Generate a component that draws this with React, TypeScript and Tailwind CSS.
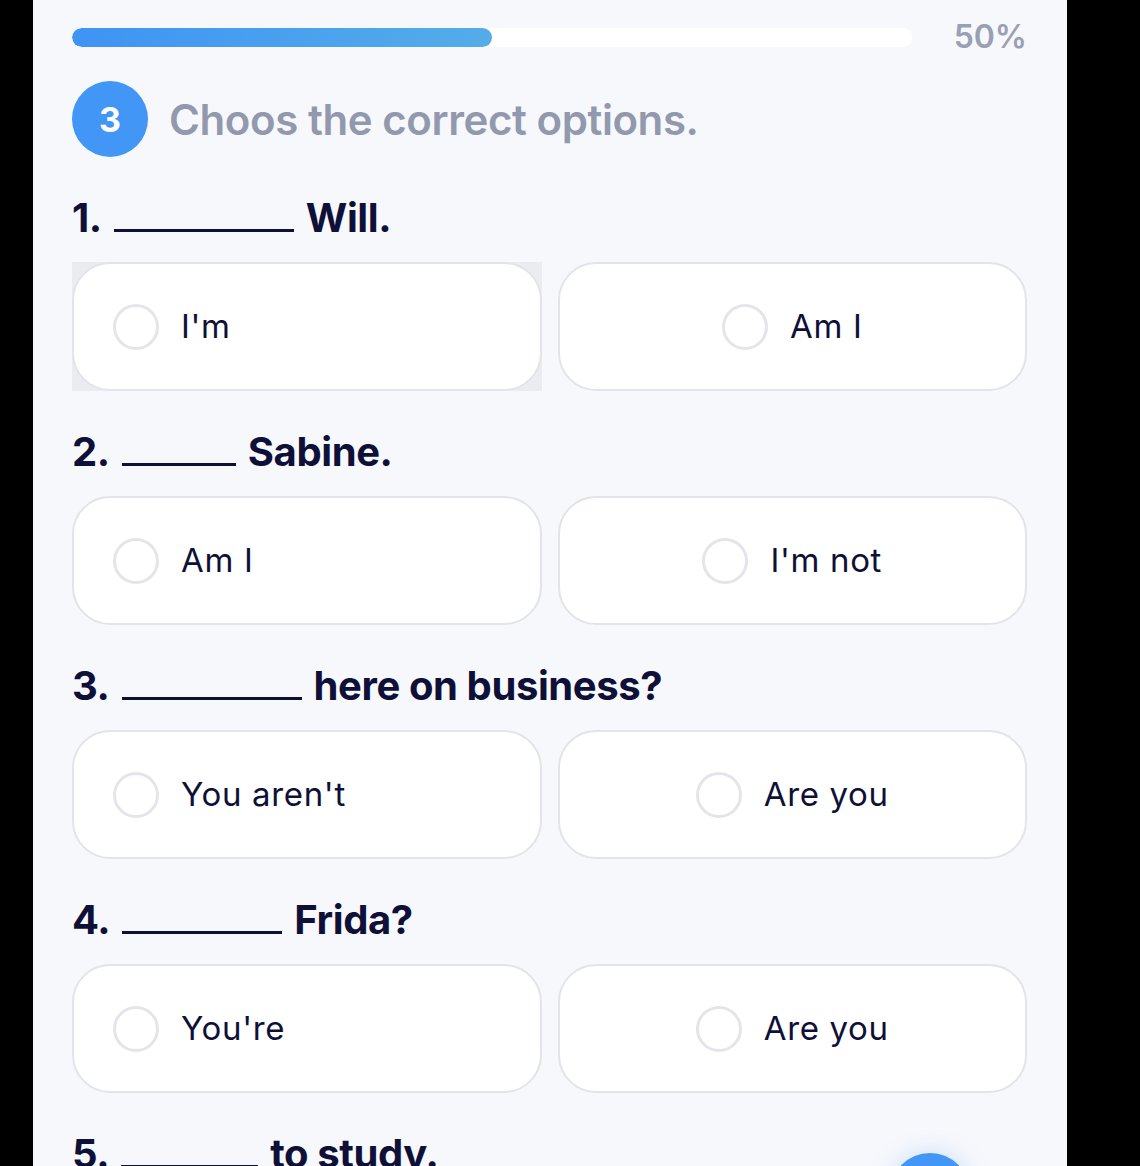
import React from "react";

type Question = {
  num: string;
  blank: number;
  rest: string;
  left: string;
  right: string;
  hovered?: boolean;
};

const questions: Question[] = [
  { num: "1.", blank: 180, rest: "Will.", left: "I'm", right: "Am I", hovered: true },
  { num: "2.", blank: 114, rest: "Sabine.", left: "Am I", right: "I'm not" },
  { num: "3.", blank: 180, rest: "here on business?", left: "You aren't", right: "Are you" },
  { num: "4.", blank: 160, rest: "Frida?", left: "You're", right: "Are you" },
];

const Radio = () => (
  <span className="block w-[46px] h-[46px] shrink-0 rounded-full border-[3px] border-[#e4e5ea] bg-white" />
);

const Option = ({ label, centered, hovered }: { label: string; centered?: boolean; hovered?: boolean }) => (
  <div className={hovered ? "bg-[#ebecf0]" : ""}>
    <div
      className={`h-[129px] rounded-[38px] border-2 border-[#e3e4ea] bg-white flex items-center gap-[22px] ${
        centered ? "justify-center" : "pl-[39px]"
      }`}
    >
      <Radio />
      <span className="text-[33px] tracking-[0.02em] text-[#0e1038] font-['Inter',sans-serif]">{label}</span>
    </div>
  </div>
);

const Heading = ({ num, blank, rest }: { num: string; blank: number; rest: string }) => (
  <h2 className="h-[48px] flex items-end gap-[12px] text-[40px] leading-[48px] font-bold tracking-[-0.01em] text-[#0e1038] font-['Inter',sans-serif]">
    <span>{num}</span>
    <span className="inline-block mb-[10px] border-b-[3px] border-[#0e1038]" style={{ width: blank }} />
    <span>{rest}</span>
  </h2>
);

const QuestionBlock = ({ q }: { q: Question }) => (
  <div className="mt-[37px] first:mt-0">
    <Heading num={q.num} blank={q.blank} rest={q.rest} />
    <div className="mt-[20px] grid grid-cols-2 gap-[16px]">
      <Option label={q.left} hovered={q.hovered} />
      <Option label={q.right} centered />
    </div>
  </div>
);

export default function App() {
  return (
    <div className="w-[1140px] h-[1166px] bg-black flex overflow-hidden">
      <div className="ml-[33px] w-[1034px] h-full bg-[#f7f8fc] pl-[39px] pr-[40px] pt-[21px] relative overflow-hidden">
        <div className="flex items-center">
          <div className="w-[840px] h-[19px] rounded-full bg-white overflow-hidden">
            <div className="w-1/2 h-full rounded-full bg-gradient-to-r from-[#3f93f4] to-[#55ace8]" />
          </div>
          <span className="ml-auto text-[32px] font-semibold text-[#9aa0b4] font-['Inter',sans-serif] leading-none">50%</span>
        </div>

        <div className="mt-[28px] flex items-center gap-[21px]">
          <div className="w-[76px] h-[76px] rounded-full bg-[#4297f6] flex items-center justify-center text-white text-[34px] font-bold font-['Inter',sans-serif]">
            3
          </div>
          <h1 className="text-[42px] font-semibold text-[#9298ad] tracking-[-0.01em] font-['Inter',sans-serif]">
            Choos the correct options.
          </h1>
        </div>

        <div className="mt-[37px]">
          {questions.map((q) => (
            <QuestionBlock key={q.num} q={q} />
          ))}
          <div className="mt-[37px]">
            <Heading num="5." blank={137} rest="to study." />
          </div>
        </div>

        <div className="absolute left-[857px] top-[1153px] w-[80px] h-[80px] rounded-full bg-[#4297f6] shadow-[0_0_24px_rgba(66,151,246,0.25)]" />
      </div>
    </div>
  );
}
